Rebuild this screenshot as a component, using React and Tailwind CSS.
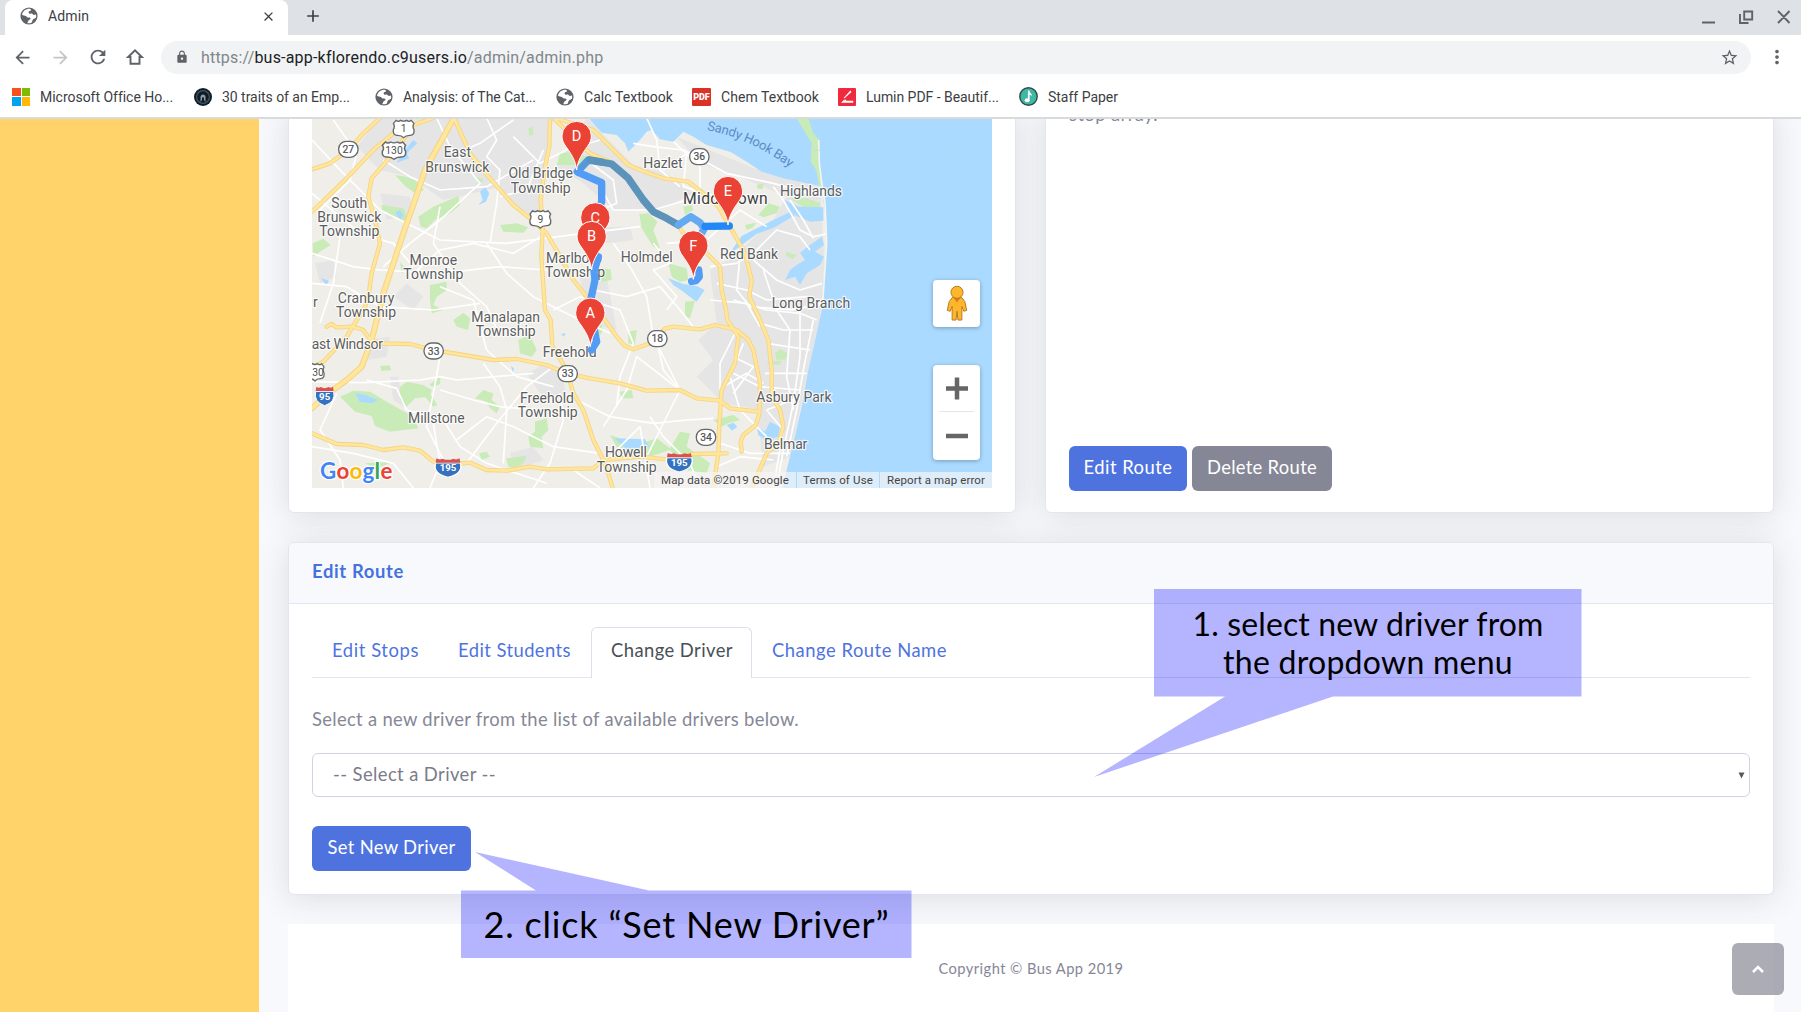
import React, { useLayoutEffect, useRef } from "react";
import { MdArrowBack, MdArrowForward, MdRefresh, MdStarBorder, MdMoreVert, MdClose, MdAdd, MdLock } from "react-icons/md";

/* Single line of text whose letter spacing is tuned to fill a given width. */
function Fit({ w, className = "", children }) {
  const ref = useRef(null);
  useLayoutEffect(() => {
    const el = ref.current;
    el.style.letterSpacing = "0px";
    const n = el.textContent.length;
    el.style.letterSpacing = (w - el.getBoundingClientRect().width) / n + "px";
  }, [w]);
  return (
    <span ref={ref} className={"inline-block whitespace-pre " + className}>
      {children}
    </span>
  );
}

const BOOKMARKS = [
  { label: "Microsoft Office Ho...", w: 132, box: "w-[182px]", icon: <Windows /> },
  { label: "30 traits of an Emp...", w: 128, box: "w-[181px]", icon: <Traits /> },
  { label: "Analysis: of The Cat...", w: 133, box: "w-[181px]", icon: <Globe /> },
  { label: "Calc Textbook", w: 89, box: "w-[136px]", icon: <Globe /> },
  { label: "Chem Textbook", w: 98, box: "w-[146px]", icon: <Pdf /> },
  { label: "Lumin PDF - Beautif...", w: 133, box: "w-[181px]", icon: <Lumin /> },
  { label: "Staff Paper", w: 70, box: "w-[120px]", icon: <Note /> },
];

function Globe() {
  return (
    <svg viewBox="0 0 18 18" className="size-[18px]">
      <circle cx="9" cy="9" r="8.600" fill="#5f6368" />
      <path d="M10.500 1.900C6.500 1.300 2.800 3.700 2 7.700c1.200.9 2.700.6 3.900 1.200.8.400 1 1.300 1.900 1.600.9.200 2-.2 2.600.6.500.8-.4 1.600-1.200 1.800-.9.300-.9 1.100-1.500 2.100-.3.500-.5 1-.4 1.300 1.700.2 3.200-.1 4.600-.9.500-1.200.3-2.300 1.300-3.200.8-.8 2.300-.6 2.900-1.700.2-.8.100-1.900-.1-2.700-.8-.5-1.200.2-2 .1-.9-.1-1.100-.9-1.800-1.200-.9-.4-2.100.3-3-.3-.9-.5-.7-1.900.2-2.300.7-.3 1.200-.2 1.600-.9z" fill="#fff" />
    </svg>
  );
}
function Windows() {
  return (
    <span className="grid size-[18px] grid-cols-2 gap-px">
      <i className="bg-[#f8511e]" /><i className="bg-[#80ba01]" /><i className="bg-[#02a4ef]" /><i className="bg-[#ffb902]" />
    </span>
  );
}
function Traits() {
  return (
    <svg viewBox="0 0 18 18" className="size-[18px]">
      <circle cx="9" cy="9" r="9" fill="#111c24" />
      <circle cx="9" cy="9" r="6.4" fill="none" stroke="#3d596b" strokeWidth="1.2" />
      <path d="M6.5 14V8.5a2.6 2.6 0 0 1 5 0V14l-1.5-2V9.500H8V12z" fill="#8b9aa5" />
    </svg>
  );
}
function Pdf() {
  return <span className="flex h-[18px] w-[19px] items-center justify-center rounded-[1px] bg-[#db3228] font-['Roboto',sans-serif] text-[9px] font-black text-white">PDF</span>;
}
function Lumin() {
  return (
    <svg viewBox="0 0 18 18" className="size-[18px]">
      <rect width="18" height="18" rx="1" fill="#f0293e" />
      <path d="M12.300 2.500 5.800 9.800l2.700 3h6.700v2H3l3-3 1.200 1L6.500 10.300 13.500 4z" fill="#fff" />
    </svg>
  );
}
function Note() {
  return (
    <svg viewBox="0 0 19 19" className="size-[19px]">
      <circle cx="9.500" cy="9.500" r="8.700" fill="#3fb8a5" stroke="#2d4a48" strokeWidth="1.400" />
      <path d="M9.800 3.500v9" stroke="#fff" strokeWidth="1.700" />
      <path d="M9.500 3.500c.5 2.500 3.800 2.300 3.300 6-.5-1.500-1.500-1.800-3.300-2z" fill="#fff" />
      <ellipse cx="8.200" cy="13.200" rx="2.500" ry="2" fill="#fff" />
    </svg>
  );
}

function Chrome() {
  return (
    <header className="relative z-10 h-[119px] border-b-2 border-[#d9dadc] bg-white font-['Roboto',sans-serif] text-[#3c4043]">
      <div className="flex h-[35px] justify-between bg-[#dee1e6]">
        <div className="flex">
          <div className="ml-[5px] flex h-[35px] w-[283px] items-center rounded-t-lg bg-white pr-[12px] pb-[3px] pl-[15px]">
            <Globe />
            <span className="mr-auto ml-[10px] text-[14px]"><Fit w={41}>Admin</Fit></span>
            <MdClose className="size-[15px]" />
          </div>
          <MdAdd className="mt-[6px] ml-[15px] size-5" />
        </div>
        <div className="flex items-start pt-[9px] pr-[8px] text-[#5f6368]">
          <svg viewBox="0 0 92 20" className="h-5 w-[92px]" fill="none" stroke="currentColor" strokeWidth="1.900">
            <path d="M1 13.500h13M39 5v9h8.500M43.200 2.500h8v8h-8zM77 2l11.500 12M88.500 2 77 14" />
          </svg>
        </div>
      </div>
      <div className="flex h-[44px] items-center text-[#5f6368]">
        <MdArrowBack className="ml-3 size-[21px]" />
        <MdArrowForward className="ml-[17px] size-[21px] text-[#c3c5c8]" />
        <MdRefresh className="ml-4 size-[22px]" />
        <svg viewBox="0 0 18 18" className="ml-[17px] size-[18px]" fill="none" stroke="currentColor" strokeWidth="1.900">
          <path d="M2.200 9 9 2.300 15.800 9H13.500v6.800h-9V9z" />
        </svg>
        <div className="ml-[17px] flex h-[33px] w-[1590px] items-center rounded-full bg-[#f1f3f4] pr-[12px] pl-[14px]">
          <MdLock className="size-[14px]" />
          <span className="mt-px ml-3 text-base text-[#80868b]">
            <Fit w={402}>https://<b className="font-normal text-[#202124]">bus-app-kflorendo.c9users.io</b>/admin/admin.php</Fit>
          </span>
          <MdStarBorder className="ml-auto size-[19px]" />
        </div>
        <MdMoreVert className="ml-[15px] size-[22px]" />
      </div>
      <div className="flex h-[35px] items-center pl-3 text-[14px]">
        {BOOKMARKS.map((b) => (
          <div key={b.label} className={"flex shrink-0 items-center " + b.box}>
            {b.icon}
            <span className="ml-[10px]"><Fit w={b.w}>{b.label}</Fit></span>
          </div>
        ))}
      </div>
    </header>
  );
}

const WATER = [
  "M865 24 905 68 950 75 975 100 985 125 1020 90 1040 65 1055 60 1080 88 1120 95 1150 65 1180 80 1220 105 1290 125 1340 155 1385 185 1450 205 1520 220 1562 228 1570 270 1578 330 1578 400 1572 500 1565 600 1550 670 1525 780 1505 890 1480 1000 1460 1080 1448 1134 2076 1134 2076 24z",
  "M1290 428 1325 378 1370 355 1420 330 1470 306 1485 315 1425 352 1370 372 1335 398 1305 420z",
  "M1450 268 1495 290 1570 292 1570 332 1530 335 1490 318 1465 300z",
  "M1566 380 1530 405 1500 428 1515 450 1490 465 1470 480 1455 510 1485 500 1500 525 1520 490 1560 465 1572 440 1545 425 1572 405z",
  "M1105 505 1150 522 1190 528 1214 540 1190 575 1175 565 1150 545 1120 525z",
  "M1370 950 1395 965 1410 935 1440 950 1435 980 1400 990 1375 975z",
  "M1280 945 1300 938 1312 950 1296 962z",
  "M535 285 548 270 540 245 555 230 568 250 558 275z",
  "M165 850 195 855 235 870 215 880 180 876z",
  "M945 985 1035 988 1048 1010 980 1018 960 1000z",
  "M285 308 300 300 312 318 300 328z", "M340 90 352 100 320 130 328 145 290 158 310 125z",
  "M64 505 88 512 78 526z", "M633 768 642 775 638 786z", "M783 672 797 670 792 680z",
];
const PARKS = [
  "M1490 24 1525 24 1540 70 1558 90 1556 160 1566 225 1558 228 1548 180 1532 155 1535 100 1505 50z",
  "M355 320 400 290 475 258 480 285 450 310 405 330 380 355 362 350z",
  "M245 285 310 295 322 320 310 335 280 318 245 300z",
  "M285 195 320 200 345 210 372 240 345 250 315 228z",
  "M38 400 70 386 92 405 60 425 40 440z",
  "M600 345 650 340 685 352 670 368 610 365z",
  "M780 130 825 125 860 140 850 165 770 165z",
  "M1018 312 1045 310 1072 335 1060 360 1080 415 1060 410 1025 355z",
  "M1405 280 1440 290 1430 310 1390 322 1375 315z",
  "M1470 265 1520 265 1560 280 1558 305 1530 302 1510 290z",
  "M1105 460 1160 475 1165 510 1140 515 1115 500z",
  "M1150 290 1175 285 1180 300 1155 315z", "M1335 345 1368 338 1360 352 1340 360z",
  "M1370 225 1390 220 1388 238 1372 236z", "M1457 425 1490 435 1478 448 1460 438z",
  "M120 860 160 842 210 845 260 875 340 920 355 955 270 965 225 948 215 918 165 905z",
  "M300 830 320 815 370 825 395 840 390 860 345 865 320 890 300 870z",
  "M375 860 395 858 412 885 400 890z", "M388 825 422 797 420 822 398 830z",
  "M525 865 550 840 580 850 575 870 600 890 590 910 570 895 560 875z",
  "M705 935 740 925 745 960 725 980 730 1015 690 1010 685 980 705 965z",
  "M618 1045 680 1038 670 1060 645 1075 625 1070z",
  "M538 1030 560 1025 570 1040 545 1050z", "M195 1060 280 1055 230 1075z",
  "M655 690 690 675 710 720 695 740 660 730z",
  "M460 630 490 608 510 625 505 660 470 650z",
  "M390 525 440 515 440 540 410 560 400 585 430 600 395 610 390 570z",
  "M865 630 890 615 910 660 890 690 875 660z",
  "M985 665 1010 660 1005 705 985 700z", "M960 845 995 840 1000 865 965 865z",
  "M930 975 960 985 980 1015 1070 985 1110 1015 1140 965 1170 970 1160 1010 1230 1060 1220 1090 1160 1080 1110 1020 1050 1040 950 1010z",
  "M1240 930 1300 915 1320 930 1285 940 1265 950z",
  "M1155 575 1185 572 1170 625 1155 620z",
  "M1425 730 1440 718 1462 728 1458 748 1430 750z", "M1400 755 1445 752 1440 765 1405 762z",
  "M895 475 932 478 935 510 905 515z", "M240 768 268 766 274 780 245 783z",
  "M300 455 320 480 305 490z", "M685 55 698 50 700 75 688 76z", "M530 200 552 210 535 222z",
];
const URBAN = [
  "M240 24 760 24 735 170 720 330 650 290 600 230 520 250 430 270 330 200 240 180 170 110z",
  "M860 24 1000 165 1100 190 1180 250 1080 300 940 300 850 220 770 170z",
  "M1130 80 1400 190 1560 228 1575 480 1560 620 1525 780 1470 1040 1390 1070 1370 900 1320 760 1250 640 1230 480 1300 440 1420 330 1460 260 1320 200 1200 160z",
  "M1195 690 1250 640 1330 700 1380 900 1270 880 1190 800 1240 750z",
  "M680 790 740 760 790 800 800 870 720 850z", "M200 690 270 680 260 740 200 750z",
  "M45 460 100 450 110 500 60 520z", "M240 250 330 260 340 310 260 330z", "M630 1030 700 1010 730 1050 650 1080z",
  "M270 800 295 800 310 890 280 870z", "M320 520 370 560 340 600 280 560z", "M880 350 990 350 1000 390 920 400z", "M840 500 920 500 950 660 860 640z",
];
const MINOR = [
  "M36 90 120 180 240 300 300 330 420 390 620 400 850 370 1020 350",
  "M100 30 170 130 150 210 60 300", "M250 150 330 200 420 240 560 230 700 150", "M470 130 540 100 640 30",
  "M560 24 590 90 560 140 600 180 590 280 570 400", "M410 24 450 110 540 220 420 330 330 400 250 470",
  "M640 80 720 160 800 120 900 90", "M36 250 180 370 280 400 340 470", "M36 430 160 470 240 480 420 490 600 470 740 480",
  "M120 380 100 520 60 640", "M420 290 400 400 480 520 560 590 600 680", "M560 400 620 490 700 560 820 620 930 670",
  "M330 500 420 420 520 400 640 430 740 370", "M420 530 520 570 560 720 650 800 760 830",
  "M36 520 140 530 240 590 400 600 540 580", "M730 120 680 240 600 260", "M900 230 940 300 1060 300 1160 270",
  "M860 150 940 210 950 280 880 310", "M940 400 990 470 1040 560 1060 680 1140 840",
  "M880 540 980 560 1080 530 1140 600 1180 650", "M760 600 840 560 960 600 1000 700 960 800 950 890",
  "M200 810 290 835 320 900 430 930 480 1010 560 1060 740 1120", "M36 815 190 818 360 810 420 800 470 810 700 790",
  "M400 940 420 1060 390 1134", "M500 1060 590 940 680 830 760 770", "M420 740 400 850 380 950 430 1050",
  "M550 760 600 830 620 900 610 1060", "M36 1010 160 1030 280 1060 340 1134", "M110 850 60 960 120 1050 130 1134",
  "M420 840 520 870 600 890 720 900", "M470 990 560 920 640 950 760 1010 900 1030", "M700 1134 750 1060 790 930 780 850",
  "M830 870 930 920 1060 940 1160 930 1240 925", "M910 950 980 840 1010 740 1140 840", "M1050 920 1090 980 1170 1060 1200 1134",
  "M1070 690 1090 780 1140 840 1080 960 1040 1040", "M820 1080 900 1134", "M930 1040 1020 950 1050 1134",
  "M1040 24 1070 90 1080 180 1140 230", "M1000 100 1060 110 1150 120 1280 190 1420 220 1560 260", "M1090 180 1160 130 1150 230 1250 260 1320 210",
  "M1120 95 1200 170 1200 250", "M1420 230 1450 270 1500 360 1540 380 1578 372", "M1470 270 1510 330 1540 385",
  "M1230 470 1310 460 1360 430 1430 360 1500 380 1530 420", "M1320 440 1310 540 1350 590 1480 600 1565 580",
  "M1360 450 1430 510 1500 540 1566 520", "M1390 480 1430 600 1470 660 1460 800 1480 900", "M1250 520 1340 540 1400 570 1520 560",
  "M1310 660 1260 760 1260 840", "M1330 700 1290 800 1320 900 1400 980", "M1300 570 1400 600 1500 610 1550 630",
  "M1380 640 1450 660 1540 660", "M1400 700 1530 720", "M1395 790 1520 790", "M1300 790 1380 830 1500 840",
  "M1500 600 1500 740 1480 880 1450 1020 1430 1134", "M1540 630 1510 780 1490 900 1460 1040", "M1270 830 1340 790 1390 820",
  "M1260 1000 1350 1030 1470 1030", "M1250 1070 1320 1040 1420 1050", "M1420 1134 1450 960 1400 900 1500 860",
  "M1300 740 1360 770 1300 850", "M1060 400 1110 460 1060 480 1130 560 1100 600", "M1230 570 1340 580 1380 650", "M1100 400 1220 390 1320 300 1400 350",
];
const MAJOR = [
  "M36 178 90 160 145 120 190 70 240 24", "M36 305 130 215 220 120 280 70 340 45 400 24",
  "M330 60 280 130 215 205 205 260 225 330 240 400 215 490 205 560 195 590 140 680 70 755 36 772",
  "M80 650 95 642 110 652 160 650 190 660 215 695 230 695",
  "M462 24 510 130 570 205 640 285 690 325 740 370 775 430 820 510 860 560 915 630 950 680 975 708 1000 718 1050 700 1065 684 1095 656 1120 650 1200 658 1245 645 1310 660 1345 690 1360 720 1380 820 1378 910 1368 945 1330 975 1322 995 1325 1025",
  "M750 24 748 110 735 170 722 270 728 360 724 440 735 600 752 630 757 710 800 780 820 850 850 900 880 990 905 1040 925 1090 938 1134",
  "M765 24 880 60 930 110 985 165 1020 180 1090 205 1165 215 1210 250 1255 290 1290 350 1335 430 1355 510 1348 560 1380 630 1405 690 1415 780 1415 860 1440 900 1450 950 1435 1000 1400 1030 1370 1100 1355 1134",
  "M760 24 870 130 940 160 985 200 1030 270 1060 310 1130 340 1150 370 1220 430 1260 470 1265 540 1278 600 1282 630 1315 680 1305 760 1265 840 1258 940 1255 1030 1240 1134",
  "M215 700 330 702 400 720 580 750 650 747 740 765 800 790 870 805 960 820 1040 842 1140 840 1190 865 1260 872 1290 895 1375 905",
  "M36 970 110 1002 190 1005 250 1020 310 1012 360 1022 400 1055 440 1065 510 1058 560 1080 620 1082 690 1070 740 1078 880 1075 910 1050 1020 1040 1100 1048 1180 1032 1280 1030",
];
const TURNPIKE = "M462 24 375 180 345 270 310 370 250 550 215 690 185 770 140 810 85 850 36 895";

const LABELS = [
  ["East", 472, 140, 82], ["Brunswick", 472, 185, 192], ["Old Bridge", 722, 205, 193], ["Township", 722, 248, 180],
  ["South", 148, 293, 108], ["Brunswick", 148, 336, 192], ["Township", 148, 379, 180], ["Monroe", 400, 465, 143],
  ["Township", 400, 508, 180], ["Cranbury", 198, 578, 170], ["Township", 198, 621, 180], ["Marlboro", 822, 458, 168],
  ["Township", 825, 500, 180], ["Manalapan", 617, 635, 206], ["Township", 617, 677, 180], ["Freehold", 809, 742, 162],
  ["Freehold", 741, 878, 162], ["Township", 743, 921, 180], ["Millstone", 409, 940, 170], ["Howell", 978, 1042, 126],
  ["Township", 980, 1085, 180], ["ast Windsor", 142, 718, 214], ["r", 46, 590, 12], ["Hazlet", 1089, 175, 118],
  ["Holmdel", 1040, 456, 156], ["Highlands", 1533, 258, 186], ["Red Bank", 1347, 448, 174],
  ["Long Branch", 1533, 594, 236], ["Asbury Park", 1482, 876, 226], ["Belmar", 1457, 1018, 130],
];
const OVALS = [["27", 145, 118], ["36", 1198, 140], ["33", 401, 723], ["33", 803, 791], ["18", 1072, 686], ["34", 1218, 982]];
const US = [["1", 311, 57, 32], ["130", 282, 122, 36], ["9", 721, 328, 32], ["30", 45, 787, 28]];
const INTERSTATES = [["95", 74, 858, 29], ["195", 444, 1073, 40], ["195", 1138, 1057, 40]];
const PINS = [["D", 830, 180], ["C", 886, 424], ["B", 875, 480], ["A", 871, 710], ["E", 1284, 345], ["F", 1180, 508]];

function RouteMap() {
  return (
    <div className="relative h-[370px] w-[680px] overflow-hidden">
      <svg viewBox="36 24 2040 1110" className="block h-full w-full font-['Roboto',sans-serif]">
        <rect x="36" y="24" width="2040" height="1110" fill="#f0eee9" />
        <g fill="#e5e5e5">{URBAN.map((d) => <path key={d} d={d} />)}</g>
        <g fill="#c8ebb8">{PARKS.slice(1).map((d) => <path key={d} d={d} />)}</g>
        <g fill="#aadaff">{WATER.map((d) => <path key={d} d={d} />)}</g>
        <path d={PARKS[0]} fill="#c8ebb8" />
        <path d="M1556 90 1558 160 1566 225 1575 280 1580 400 1568 580" fill="none" stroke="#f6f4ee" strokeWidth="5" />
        <g fill="none" stroke="#b4dbf6" strokeWidth="2"><path d="M1955 24V1134M1540 121H2076M1480 1001H2076" /></g>
        <g fill="none" stroke="#fff" strokeWidth="5" strokeLinejoin="round">{MINOR.map((d) => <path key={d} d={d} />)}</g>
        <g fill="none" stroke="#f5d382" strokeWidth="13" strokeLinejoin="round" strokeLinecap="round">{MAJOR.map((d) => <path key={d} d={d} />)}<path d={TURNPIKE} strokeWidth="18" /></g>
        <g fill="none" stroke="#ffe69a" strokeWidth="8" strokeLinejoin="round" strokeLinecap="round">{MAJOR.map((d) => <path key={d} d={d} />)}<path d={TURNPIKE} strokeWidth="12" /></g>

        {OVALS.map(([t, x, y]) => (
          <g key={t + x}>
            <rect x={x - 29} y={y - 24} width="58" height="48" rx="23" fill="#fff" stroke="#66696c" strokeWidth="4" />
            <text x={x} y={y + 11} textAnchor="middle" fontSize="31" fill="#4c4f52" stroke="#4c4f52" strokeWidth=".6">{t}</text>
          </g>
        ))}
        {US.map(([t, x, y, r]) => (
          <g key={t + x}>
            <path transform={`translate(${x} ${y}) scale(${r / 32} 1)`} d="M-23-26Q-16-20-9-26Q0-21 9-26Q16-20 23-26L31-16Q25-8 31 2Q33 17 21 19Q7 18 0 26Q-7 18-21 19Q-33 17-31 2Q-25-8-31-16z" fill="#fff" stroke="#66696c" strokeWidth="4" />
            <text x={t === "30" ? 54 : x} y={y + 10} textAnchor="middle" fontSize="31" fill="#4c4f52">{t}</text>
          </g>
        ))}
        {INTERSTATES.map(([t, x, y, r]) => (
          <g key={t + x}>
            <g transform={`translate(${x} ${y}) scale(${r / 29} 1)`}>
              <path d="M-27-14H27Q34 18 0 29Q-34 18-27-14z" fill="#3472c0" stroke="#fff" strokeWidth="3" />
              <path d="M-25-28Q-18-22-12-27Q0-20 12-27Q18-22 25-28L27-15H-27z" fill="#d9504f" />
            </g>
            <text x={x} y={y + 11} textAnchor="middle" fontSize="29" fontWeight="700" fill="#fff">{t}</text>
          </g>
        ))}

        <g textAnchor="middle" fontSize="42" fill="#5b5e60" stroke="#fff" strokeWidth="7" strokeOpacity=".8" strokeLinejoin="round" className="[paint-order:stroke]">
          {LABELS.map(([t, x, y, w]) => <text key={t + x + y} x={x} y={y} textLength={w}>{t}</text>)}
          <text x="1276" y="283" fontSize="47" fill="#3c3d3e" textLength="254">Middletown</text>
        </g>
        <path id="bay" d="M1220 60Q1350 84 1468 172" fill="none" />
        <text fontSize="39" fill="#5f8ac7"><textPath href="#bay" textLength="276">Sandy Hook Bay</textPath></text>

        <g fill="none" strokeLinecap="round" strokeLinejoin="round" strokeWidth="22">
          <path d="M832 185 865 150 905 156" stroke="#5598dd" />
          <path d="M870 150 935 162 985 205 1030 270 1060 305 1100 325 1135 345" stroke="#5b93ba" />
          <path d="M1135 345 1172 320 1200 338 1213 355 1205 370" stroke="#64aaf3" />
          <path d="M1215 349 1288 348" stroke="#2388f5" />
          <path d="M835 187 905 218 905 275 895 300" stroke="#529cf5" />
          <path d="M895 440 882 485 885 510 872 570" stroke="#529cf5" />
          <path d="M883 660 890 695 874 720" stroke="#529cf5" />
          <path d="M1196 480 1198 500 1188 512 1175 514" stroke="#529cf5" />
        </g>
        {PINS.map(([t, x, y]) => (
          <g key={t} transform={`translate(${x} ${y})`}>
            <path d="M0 0C-3-28-16-48-32-70C-40-81-44-90-44-102A44 44 0 0 1 44-102C44-90 40-81 32-70C16-48 3-28 0 0z" fill="#ea4335" stroke="#fff" strokeWidth="3" />
            <text y="-86" textAnchor="middle" fontSize="44" fill="#fff">{t}</text>
          </g>
        ))}
        <text x="60" y="1106" fontSize="67" textLength="217" stroke="#fff" strokeWidth="7" className="font-['Lato',sans-serif] [paint-order:stroke]" fontWeight="700">
          <tspan fill="#4285f4">G</tspan><tspan fill="#ea4335">o</tspan><tspan fill="#fbbc05">o</tspan><tspan fill="#4285f4">g</tspan><tspan fill="#34a853">l</tspan><tspan fill="#ea4335">e</tspan>
        </text>
      </svg>

      <div className="absolute top-[162px] right-[12px] flex h-[47px] w-[47px] items-center justify-center rounded-sm bg-white shadow-[0_1px_4px_rgba(0,0,0,.3)]">
        <svg viewBox="0 0 22 38" className="h-[37px] w-[22px]" stroke="#b7791b" strokeWidth="1">
          <path d="M6 13h10l3 4 2 9-3 1-2-5v14H12l-1-9-1 9H6V22l-2 5-3-1 2-9z" fill="#fcb72c" />
          <path d="M7.500 13h7L11 18z" fill="#e5752b" stroke="none" />
          <circle cx="11" cy="7.500" r="6.200" fill="#fcb72c" />
        </svg>
      </div>
      <div className="absolute top-[247px] right-[12px] flex h-[95px] w-[47px] flex-col items-center rounded-sm bg-white shadow-[0_1px_4px_rgba(0,0,0,.3)]">
        <svg viewBox="0 0 22 46" className="h-[46px] w-[22px]" stroke="#666" strokeWidth="4.500"><path d="M0 23.500h22M11 12.500v22" /></svg>
        <div className="h-px w-[35px] bg-[#e6e6e6]" />
        <svg viewBox="0 0 22 46" className="h-[46px] w-[22px]" stroke="#666" strokeWidth="4.500"><path d="M0 24h22" /></svg>
      </div>
      <div className="absolute right-0 bottom-0 flex h-4 items-center gap-px font-['Roboto',sans-serif] text-[11.5px] leading-4 text-[#444]">
        <span className="bg-[#f5f5f5]/70 px-[7px]"><Fit w={128}>Map data ©2019 Google</Fit></span>
        <span className="bg-[#f5f5f5]/70 px-[6px]"><Fit w={70}>Terms of Use</Fit></span>
        <span className="bg-[#f5f5f5]/70 px-[7px]"><Fit w={98}>Report a map error</Fit></span>
      </div>
    </div>
  );
}

const CARD = "rounded-md border border-[#e3e6f0] bg-white shadow-[0_3px_32px_rgba(58,59,69,.15)]";

export default function App() {
  return (
    <div className="relative flex h-[1012px] w-[1801px] flex-col overflow-hidden bg-[#f8f9fc] font-['Lato',sans-serif] text-[18.4px] leading-7 text-[#858796]">
      <Chrome />
      <div className="-mt-px flex min-h-0 flex-1">
        <aside className="w-[259px] shrink-0 bg-[#ffd36a]" />
        <main className="flex flex-1 flex-col pr-[27px] pl-[29px]">
          <div className="-mt-[10px] flex gap-[29px]">
            <div className={CARD + " h-[405px] w-[728px] pt-[9px] pl-[23px]"}>
              <RouteMap />
            </div>
            <div className={CARD + " flex h-[405px] flex-1 flex-col justify-between px-[23px] pb-[21px]"}>
              <p className="-mt-[9px]"><Fit w={89}>stop array.</Fit></p>
              <div className="flex gap-[5px] text-white">
                <button className="h-[45px] w-[118px] rounded-md bg-[#4e73df] pb-[4px]"><Fit w={89}>Edit Route</Fit></button>
                <button className="h-[45px] w-[140px] rounded-md bg-[#858796] pb-[4px]"><Fit w={110}>Delete Route</Fit></button>
              </div>
            </div>
          </div>

          <section className={CARD + " mt-[29px] h-[353px] shrink-0"}>
            <div className="flex h-[61px] items-center rounded-t-md border-b border-[#e3e6f0] bg-[#f8f9fc] pb-[5px] pl-[23px] font-bold text-[#4472df]">
              <Fit w={92}>Edit Route</Fit>
            </div>
            <div className="px-[23px] pt-[23px]">
              <nav className="flex h-[51px] border-b border-[#e3e6f0] text-[#4e73df]">
                <span className="w-[126px] pt-[9px] pl-5"><Fit w={87}>Edit Stops</Fit></span>
                <span className="w-[153px] pt-[9px] pl-5"><Fit w={113}>Edit Students</Fit></span>
                <span className="h-[51px] w-[161px] rounded-t-md border border-b-0 border-[#dddfeb] bg-white pt-2 pl-[19px] text-[#495057]"><Fit w={122}>Change Driver</Fit></span>
                <span className="w-[200px] pt-[9px] pl-5"><Fit w={175}>Change Route Name</Fit></span>
              </nav>
              <p className="mt-[27px]"><Fit w={487}>Select a new driver from the list of available drivers below.</Fit></p>
              <div className="mt-[20px] flex h-[44px] items-center justify-between rounded-md border border-[#d1d3e2] bg-white pr-[4px] pb-[3px] pl-5 text-[#7a7c88]">
                <Fit w={163}>-- Select a Driver --</Fit>
                <svg viewBox="0 0 7 7" className="mt-[3px] size-[7px]"><path d="M.5.500h6L3.500 6.500z" fill="#555a63" /></svg>
              </div>
              <button className="mt-[29px] h-[45px] w-[159px] rounded-md bg-[#4e73df] pb-[4px] text-white"><Fit w={128}>Set New Driver</Fit></button>
            </div>
          </section>

          <footer className="mt-[29px] flex flex-1 items-center justify-center bg-white text-[14.700px]">
            <Fit w={185}>Copyright © Bus App 2019</Fit>
          </footer>
        </main>
      </div>

      <button className="absolute top-[943px] left-[1732px] z-20 flex h-[52px] w-[52px] items-center justify-center rounded-md bg-[#5a5c69]/50 text-white">
        <svg viewBox="0 0 12 8" className="h-2 w-3" fill="none" stroke="currentColor" strokeWidth="2.600"><path d="M1 7 6 2l5 5" /></svg>
      </button>

      <div className="absolute top-[589px] left-[1094px] z-20 h-[188px] w-[488px] text-black">
        <svg viewBox="0 0 488 188" className="absolute inset-0 h-full w-full"><path d="M60 0H487.500V107.500H239L0 188 131 107.500H60z" fill="#0000ff" fillOpacity=".295" /></svg>
        <div className="relative ml-[60px] pt-[16px] text-center text-[32px] leading-[38px]">
          <div><Fit w={351}>1. select new driver from</Fit></div>
          <div><Fit w={290}>the dropdown menu</Fit></div>
        </div>
      </div>
      <div className="absolute top-[852px] left-[461px] z-20 h-[106px] w-[451px] text-black">
        <svg viewBox="0 0 451 106" className="absolute inset-0 h-full w-full"><path d="M0 38.500H75L14 0 188 38.500H450.500V106H0z" fill="#0000ff" fillOpacity=".295" /></svg>
        <div className="relative pt-[50px] text-center text-[36px] leading-[44px]">
          <Fit w={406}>2. click “Set New Driver”</Fit>
        </div>
      </div>
    </div>
  );
}
